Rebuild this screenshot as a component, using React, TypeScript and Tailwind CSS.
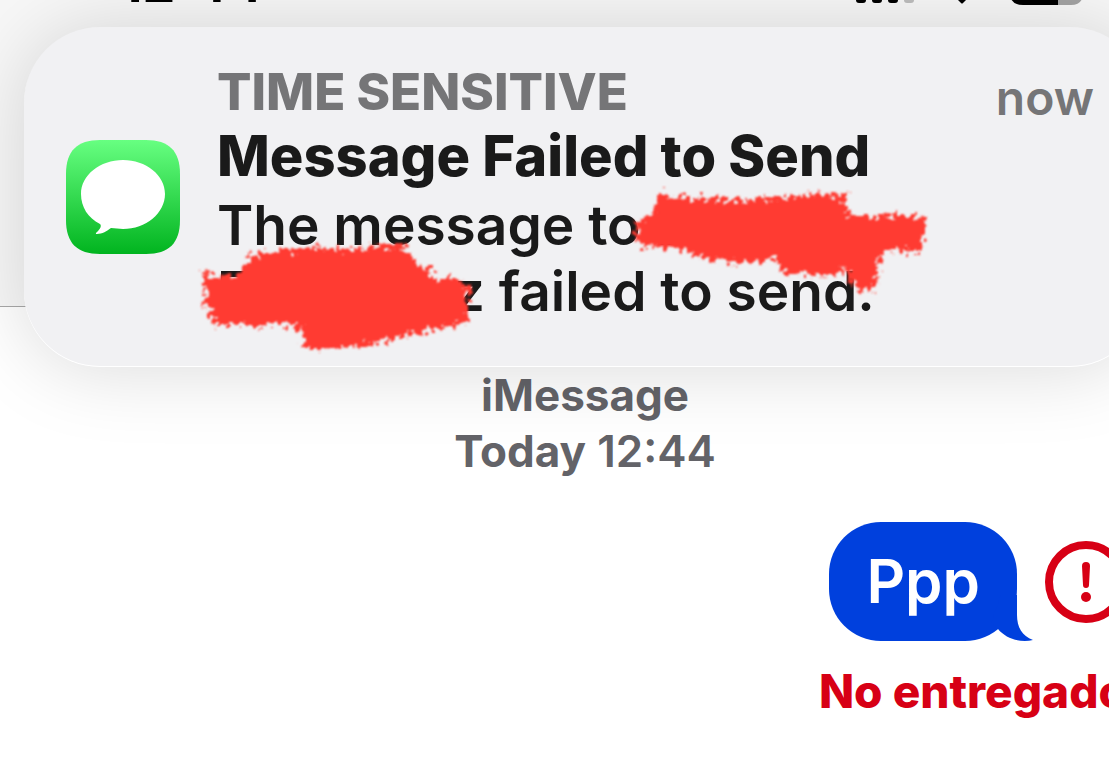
import React from "react";

function StatusIcons() {
  return (
    <svg width="228" height="46" viewBox="856 -36 228 46" className="shrink-0" aria-hidden="true">
      <rect x="856" y="-10" width="10" height="13" rx="3" />
      <rect x="872" y="-16" width="10" height="19" rx="3" />
      <rect x="888" y="-24" width="10" height="27" rx="3" />
      <rect x="904" y="-32" width="10" height="35" rx="3" fill="#bdbdbd" />
      <path d="M953 -5 Q962 -11 971 -5 L963 3 Q962 4 961 3 Z" />
      <path d="M1023 -31 H1058 V5 H1023 Q1010 5 1010 -7 V-19 Q1010 -31 1023 -31 Z" />
      <path d="M1058 -31 H1071 Q1083 -31 1083 -19 V-7 Q1083 5 1071 5 H1058 Z" fill="#a3a3a3" />
    </svg>
  );
}

function MessagesIcon() {
  return (
    <svg width="114" height="114" viewBox="0 0 114 114" className="mt-[78px] shrink-0" aria-hidden="true">
      <defs>
        <linearGradient id="green" x1="0" y1="0" x2="0" y2="1">
          <stop offset="0" stopColor="#67ff81" />
          <stop offset="1" stopColor="#01b41f" />
        </linearGradient>
      </defs>
      <path
        d="M34 0 H80 C103 0 114 11 114 34 V80 C114 103 103 114 80 114 H34 C11 114 0 103 0 80 V34 C0 11 11 0 34 0 Z"
        fill="url(#green)"
      />
      <path
        d="M57 20 C80 20 99 35 99 54 C99 73 80 89 57 89 C53 89 49 88 45 88 C41 91 36 94 31 94 C29 94 30 93 31 92 C34 89 36 86 34 84 C22 78 15 67 15 54 C15 35 34 20 57 20 Z"
        fill="#fff"
      />
    </svg>
  );
}

// red marker strokes that hide the contact name
function Scribbles() {
  return (
    <svg
      width="750"
      height="190"
      viewBox="190 175 750 190"
      className="pointer-events-none absolute -left-[27px] top-[114px]"
      aria-hidden="true"
    >
      <defs>
        <filter id="rough" x="-5%" y="-10%" width="110%" height="120%">
          <feTurbulence type="fractalNoise" baseFrequency="0.19" numOctaves="2" seed="4" />
          <feDisplacementMap in="SourceGraphic" scale="21" xChannelSelector="R" yChannelSelector="G" />
          <feGaussianBlur stdDeviation="0.8" />
        </filter>
      </defs>
      <g fill="#ff3b30" filter="url(#rough)">
        <path d="M637 222 L645 214 L654 212 L656 195 L664 193 L685 197 L705 197 L730 199 L770 198 L800 194 L845 193 L847 212 L870 215 L900 214 L922 216 L926 222 L922 240 L922 250 L895 250 L880 253 L877 268 L876 285 L868 290 L853 286 L848 270 L820 275 L800 272 L785 274 L775 258 L745 261 L715 260 L700 256 L680 248 L675 244 L645 247 L638 244 L636 230 Z" />
        <path d="M202 276 L203 271 L212 275 L235 274 L246 264 L250 254 L262 252 L285 249 L315 247 L350 248 L380 245 L405 244 L412 258 L428 268 L432 277 L455 277 L469 284 L468 300 L467 322 L440 327 L415 333 L385 340 L355 346 L325 349 L305 347 L302 330 L290 324 L214 324 L210 310 L203 300 L205 290 Z" />
      </g>
    </svg>
  );
}

function Notification() {
  return (
    <section className="absolute left-6 right-6 top-[27px] flex h-[340px] items-start gap-[37px] rounded-[76px] bg-[#f1f1f3] pl-[42px] pr-[52px] pt-[35px] shadow-[0_2px_80px_rgba(0,0,0,0.15),inset_0_-1px_0_#fff]">
      <MessagesIcon />
      <div className="relative grow whitespace-nowrap text-[#1a1a1a]">
        <p className="text-[51px] font-extrabold leading-[60px] text-[#757577]">TIME SENSITIVE</p>
        <h1 className="mt-px text-[56px] font-extrabold leading-[66px]">Message Failed to Send</h1>
        <p className="mt-[3px] text-[55px] font-semibold leading-[66px]">
          The message to B
          <br />
          <span className="inline-flex w-[268px] justify-between">
            <span>F</span>
            <span>z</span>
          </span>{" "}
          failed to send.
        </p>
        <Scribbles />
      </div>
      <time className="mt-[6px] text-[48px] font-semibold leading-[60px] text-[#757577]">now</time>
    </section>
  );
}

function Bubble() {
  return (
    <div className="relative rounded-[52px] bg-[#0040dd] px-[37px] pb-[22px] pt-[21px] text-[60px] font-semibold leading-[76px] text-white">
      Ppp
      <svg width="42" height="46" viewBox="0 0 42 46" className="absolute -right-4 bottom-0" aria-hidden="true">
        <path d="M26 0 V20 C26 32 31 41 42 45 C30 48 15 44 7 34 L0 28 L10 0 Z" fill="#0040dd" />
      </svg>
    </div>
  );
}

export default function App() {
  return (
    <div className="relative min-h-screen overflow-hidden bg-white font-['Inter',sans-serif]">
      <div className="relative w-[calc(100%+61px)]">
        <header className="h-[307px] border-b border-[#a8a8a8] bg-[#f7f7f7]">
          <div className="flex h-[10px] items-end justify-between pl-[120px] pr-[86px]">
            <time className="text-[52px] font-bold leading-none text-black">12:44</time>
            <StatusIcons />
          </div>
        </header>

        <main className="pt-[60px]">
          <div className="text-center text-[44px] leading-[56px] text-[#636368]">
            <p className="font-bold">iMessage</p>
            <p className="font-semibold">
              <span className="font-bold">Today</span> 12:44
            </p>
          </div>

          <div className="mt-[43px] flex flex-col items-end pr-[43px]">
            <div className="flex items-center gap-7">
              <Bubble />
              <button type="button" aria-label="No entregado" className="block">
                <svg width="82" height="82" viewBox="0 0 82 82" fill="none">
                  <circle cx="41" cy="41" r="37" stroke="#d70015" strokeWidth="8" />
                  <path d="M37 25 Q37 21 41 21 Q45 21 45 25 L44 44 Q44 47 41 47 Q38 47 38 44 Z" fill="#d70015" />
                  <circle cx="41" cy="56" r="5" fill="#d70015" />
                </svg>
              </button>
            </div>
            <p className="mt-[22px] text-[46px] font-extrabold leading-[56px] text-[#d70015]">No entregado</p>
          </div>
        </main>

        <Notification />
      </div>
    </div>
  );
}
